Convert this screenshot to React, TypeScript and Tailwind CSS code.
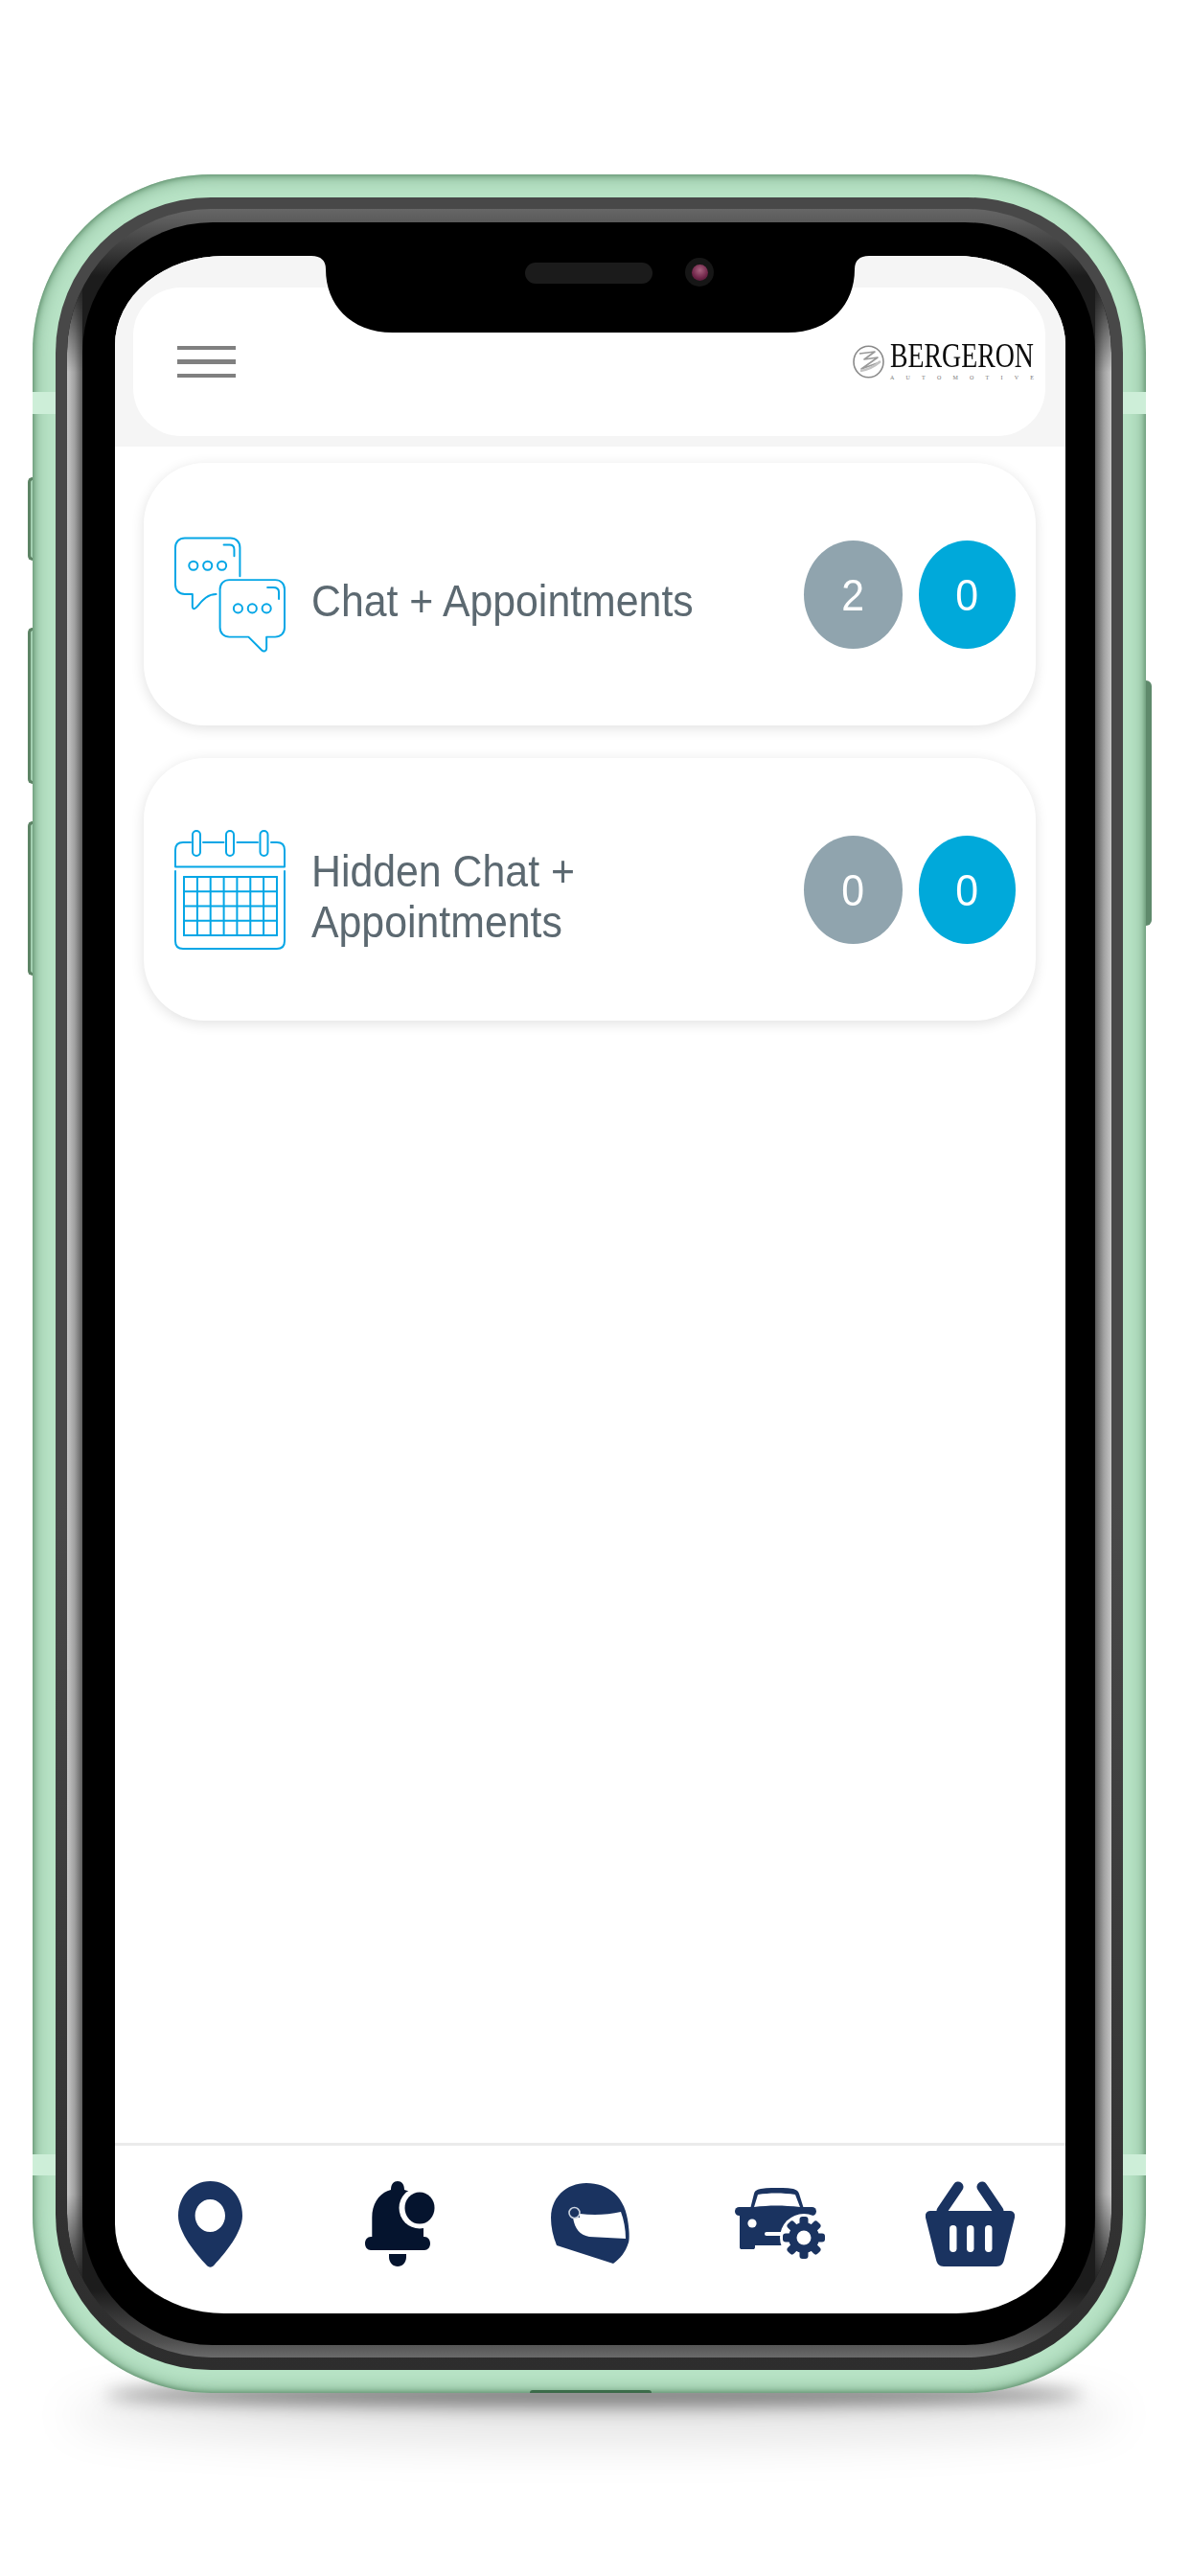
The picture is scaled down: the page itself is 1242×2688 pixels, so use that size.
import React from 'react';

const NAVY = '#1a3360';
const SKY = '#04a6e6';

function ChatIcon() {
  return (
    <svg width="117" height="121" viewBox="0 0 117 121" fill="none" stroke={SKY} strokeWidth="2" strokeLinecap="round" strokeLinejoin="round">
      <path d="M69 41V11C69 5 65 1 59 1H11C5 1 1 5 1 11V50C1 56 5 60 11 60H19V73C19 76 21 76 23 74C28 69 33 60 44 60" />
      <path d="M52 8H58C61 8 63 10 63 13V20" />
      <circle cx="20" cy="30" r="4.6" />
      <circle cx="35" cy="30" r="4.6" />
      <circle cx="50" cy="30" r="4.6" />
      <path d="M58 45H106C112 45 116 49 116 55V95C116 101 112 105 106 105H97V117C97 120 94 121 92 119L78 105H58C52 105 48 101 48 95V55C48 49 52 45 58 45Z" />
      <path d="M98 53H104C108 53 110 55 110 58V65" />
      <circle cx="67" cy="75" r="4.6" />
      <circle cx="82" cy="75" r="4.6" />
      <circle cx="97" cy="75" r="4.6" />
    </svg>
  );
}

function CalendarIcon() {
  const cols = [10, 23.9, 37.7, 51.6, 65.4, 79.3, 93.1, 107];
  const rows = [49, 64.25, 79.5, 94.75, 110];
  return (
    <svg width="116" height="125" viewBox="0 0 116 125" fill="none" stroke={SKY} strokeWidth="2" strokeLinecap="round" strokeLinejoin="round">
      <path d="M1 38.5V21C1 16 4 13 9 13H17M30 13H51.5M65.5 13H87M101 13H107C112 13 115 16 115 21V38.5H1" />
      <rect x="19" y="1" width="8" height="26" rx="4" />
      <rect x="54" y="1" width="8" height="26" rx="4" />
      <rect x="89.5" y="1" width="8" height="26" rx="4" />
      <path d="M1 43V116C1 121 4 124 9 124H107C112 124 115 121 115 116V43" />
      {cols.map((x) => (
        <path key={x} d={`M${x} 49V110`} />
      ))}
      {rows.map((y) => (
        <path key={y} d={`M10 ${y}H107`} />
      ))}
    </svg>
  );
}

function PinIcon() {
  return (
    <svg width="67" height="90" viewBox="0 0 67 90">
      <path
        fill={NAVY}
        fillRule="evenodd"
        d="M33.5 0C52 0 67 15 67 36C67 54 48 76 38 87C35 90.5 32 90.5 29 87C19 76 0 54 0 36C0 15 15 0 33.5 0ZM33.3 19C24.6 19 17.6 26.6 17.6 36C17.6 45.4 24.6 53 33.3 53C42 53 49 45.4 49 36C49 26.6 42 19 33.3 19Z"
      />
    </svg>
  );
}

function BellIcon() {
  return (
    <svg width="74" height="90" viewBox="0 0 74 90">
      <path
        fill="#05142e"
        d="M27 9C27 3 30 0 34 0C38 0 41 3 41 9C52 12 61 20 61 34V58H62C65.5 58 68 61 68 65C68 69 65.5 72 62 72H6C2.5 72 0 69 0 65C0 61 2.5 58 6 58H7.3V38C7.3 23 15 12 27 9Z"
      />
      <path fill="#05142e" d="M25 76H43V79C43 85 39 89 34 89C29 89 25 85 25 79Z" />
      <circle cx="57" cy="28" r="21.5" fill="#fff" />
      <ellipse cx="57" cy="28" rx="15.5" ry="16.5" fill="#05142e" />
    </svg>
  );
}

function HelmetIcon() {
  return (
    <svg width="82" height="85" viewBox="0 0 82 85">
      <path fill={NAVY} d="M37 0C60 0 76 14 80 38C82 50 82 58 81 62C78 72 72 79 65 84L6 65C2 55 0 46 0 36C0 15 16 0 37 0Z" />
      <path fill="#fff" d="M30 32C45 34 60 33 73 30C76 38 78 48 78 58L40 56C30 54 25 48 23 36L30 36Z" />
      <circle cx="24.5" cy="31" r="5.5" fill={NAVY} stroke="#c9d2df" strokeWidth="1.6" />
    </svg>
  );
}

function CarGearIcon() {
  const teeth = [0, 45, 90, 135, 180, 225, 270, 315];
  return (
    <svg width="94" height="76" viewBox="0 0 94 76">
      <path fill={NAVY} d="M16 22L20 6C21 2 24 2 27 1C38 -0.5 50 -0.5 61 1C64 2 66 3 67 6L72 22Z" />
      <path fill="#fff" d="M20 20L24 7C36 5 50 5 63 7L68 20C50 18 36 18 20 20Z" />
      <rect x="0" y="20" width="85" height="9" rx="4.5" fill={NAVY} />
      <path fill={NAVY} d="M5 25H80V50H60V60H21V62C21 63.5 20 64 19 64H7C6 64 5 63.5 5 62Z" />
      <circle cx="18" cy="37" r="4.6" fill="#fff" />
      <rect x="31" y="46" width="22" height="4" rx="2" fill="#fff" />
      <circle cx="72" cy="52" r="25" fill="#fff" />
      {teeth.map((a) => (
        <rect key={a} x="67.5" y="30" width="9" height="12" rx="3" fill={NAVY} transform={`rotate(${a} 72 52)`} />
      ))}
      <circle cx="72" cy="52" r="16" fill={NAVY} />
      <circle cx="72" cy="52" r="7.5" fill="#fff" />
    </svg>
  );
}

function BasketIcon() {
  return (
    <svg width="93" height="89" viewBox="0 0 93 89">
      <path stroke={NAVY} strokeWidth="11" strokeLinecap="round" d="M34 6L17 31M59 6L76 31" fill="none" />
      <path fill={NAVY} d="M5 31H88C92 31 94 35 93 38L82 82C81 86 79 89 74 89H19C14 89 12 86 11 82L0 38C-1 35 1 31 5 31Z" />
      <rect x="25" y="46" width="7.5" height="28" rx="3.7" fill="#fff" />
      <rect x="43" y="46" width="7.5" height="28" rx="3.7" fill="#fff" />
      <rect x="62" y="46" width="7.5" height="28" rx="3.7" fill="#fff" />
    </svg>
  );
}

function LogoMark() {
  return (
    <svg width="33" height="35" viewBox="0 0 33 35" fill="none">
      <ellipse cx="16.5" cy="17.5" rx="15.5" ry="16.2" stroke="#8a8a8a" strokeWidth="1.6" />
      <path d="M7 9L23 7L12 15L26 13L9 25L28 18" stroke="#9a9a9a" strokeWidth="1.6" strokeLinejoin="round" />
      <path d="M8 27C15 26 22 23 29 17" stroke="#c4c4c4" strokeWidth="2.4" />
    </svg>
  );
}

function CountRow({ icon, label, first, second }: { icon: React.ReactNode; label: string; first: number; second: number }) {
  return (
    <div className="flex h-[274px] items-center rounded-[64px] bg-white pl-[32px] pr-[21px] shadow-[0_3px_14px_rgba(0,0,0,0.12)]">
      <div className="flex w-[116px] shrink-0 justify-center">{icon}</div>
      <div className="ml-[27px] min-w-0 flex-1 origin-left scale-x-[.911] pt-[15px] text-[47px] leading-[52.6px] text-[#5c6971]">{label}</div>
      <div className="flex h-[113px] w-[103px] shrink-0 items-center justify-center rounded-[50%] bg-[#90a4ae] pt-[3px] text-[47px] text-white">
        <span className="scale-x-[.911]">{first}</span>
      </div>
      <div className="ml-[17px] flex h-[113px] w-[101px] shrink-0 items-center justify-center rounded-[50%] bg-[#00a9da] pt-[3px] text-[47px] text-white">
        <span className="scale-x-[.911]">{second}</span>
      </div>
    </div>
  );
}

export default function App() {
  return (
    <div className="relative h-[2688px] w-[1242px] overflow-hidden bg-white pl-[34px] pt-[182px] font-['Liberation_Sans',Arial,sans-serif]">
      {/* shadow under the phone */}
      <div className="absolute left-[70px] top-[2490px] h-[60px] w-[1100px] rounded-[50%] bg-[#000]/10 blur-[22px]" />
      <div className="absolute left-[110px] top-[2486px] h-[26px] w-[1020px] rounded-[50%] bg-[#000]/45 blur-[9px]" />

      {/* side buttons */}
      <div className="absolute left-[29px] top-[498px] h-[87px] w-[10px] rounded-l-[5px] border-y-[3px] border-l-[3px] border-[#5d8465] bg-[#a3cfb1]" />
      <div className="absolute left-[29px] top-[655px] h-[163px] w-[10px] rounded-l-[5px] border-y-[3px] border-l-[3px] border-[#5d8465] bg-[#a3cfb1]" />
      <div className="absolute left-[29px] top-[857px] h-[161px] w-[10px] rounded-l-[5px] border-y-[3px] border-l-[3px] border-[#5d8465] bg-[#a3cfb1]" />
      <div className="absolute left-[1192px] top-[710px] h-[256px] w-[10px] rounded-r-[6px] bg-[#5f8a6c]" />

      {/* phone body */}
      <div className="relative h-[2315px] w-[1162px] rounded-[186px] bg-[#b8e3c6] p-[24px] shadow-[inset_0_0_6px_#4d7d5a,inset_0_0_20px_#6f9f7d]">
        {/* antenna bands */}
        <div className="absolute left-0 top-[227px] h-[23px] w-[24px] bg-[#cdeed8]" />
        <div className="absolute right-0 top-[227px] h-[23px] w-[24px] bg-[#cdeed8]" />
        <div className="absolute left-0 top-[2066px] h-[22px] w-[24px] bg-[#cdeed8]" />
        <div className="absolute right-0 top-[2066px] h-[22px] w-[24px] bg-[#cdeed8]" />
        <div className="absolute bottom-0 left-[519px] h-[3px] w-[127px] rounded-t-full bg-[#3c6b4a]" />

        <div className="relative h-full rounded-[162px] bg-[linear-gradient(180deg,#484848_0%,#484848_60%,#2d2d2d_100%)] pb-[13px] pl-[12px] pr-[12px] pt-[12px]">
          <div className="relative h-full rounded-[150px] bg-[linear-gradient(180deg,#666_0,#5a5a5a_14px,#1c1c1c_70px,#1c1c1c_calc(100%-70px),#505050_calc(100%-16px),#6a6a6a_100%)] pb-[13px] pl-[16px] pr-[17px] pt-[14px]">
            <div className="absolute inset-0 rounded-[150px] bg-[linear-gradient(90deg,#c6c6c6_0,#a0a0a0_8px,#5c5c5c_16px,transparent_16px,transparent_calc(100%-17px),#5c5c5c_calc(100%-17px),#a0a0a0_calc(100%-8px),#c6c6c6_100%)] [mask-image:linear-gradient(180deg,transparent_70px,#000_170px,#000_calc(100%-170px),transparent_calc(100%-70px))]" />
            <div className="relative flex h-full flex-col rounded-[136px] bg-black pb-[33px] pl-[34px] pr-[31px] pt-[35px]">
              {/* screen */}
              <div className="relative flex h-full flex-col overflow-hidden rounded-[114px/93px] bg-white">
                <div className="h-[199px] shrink-0 bg-[#f5f5f5] pb-[11px] pl-[19px] pr-[21px] pt-[33px]">
                  <div className="flex h-full items-center justify-between rounded-[50px] bg-white pl-[46px] pr-[12px]">
                    <div className="flex w-[61px] flex-col gap-[10px]">
                      <div className="h-[4.5px] bg-[#808080]" />
                      <div className="h-[4.5px] bg-[#808080]" />
                      <div className="h-[4.5px] bg-[#808080]" />
                    </div>
                    <div className="flex items-center gap-[6px]">
                      <LogoMark />
                      <div className="mb-[7px] w-[150px] font-['Liberation_Serif',serif]">
                        <div className="origin-left scale-x-[.773] whitespace-nowrap text-[36px] leading-[40px] text-[#0c0c0c]">BERGERON</div>
                        <div className="flex justify-between text-[6px] leading-[7px] text-[#777]">
                          {'AUTOMOTIVE'.split('').map((c, i) => (
                            <span key={i}>{c}</span>
                          ))}
                        </div>
                      </div>
                    </div>
                  </div>
                </div>

                <div className="flex flex-1 flex-col gap-[34px] pl-[30px] pr-[31px] pt-[17px]">
                  <CountRow icon={<ChatIcon />} label="Chat + Appointments" first={2} second={0} />
                  <CountRow icon={<CalendarIcon />} label="Hidden Chat + Appointments" first={0} second={0} />
                </div>

                <div className="grid h-[178px] shrink-0 grid-cols-5 items-center border-t-[3px] border-[#ebebeb] pb-[12px]">
                  <div className="flex justify-center"><PinIcon /></div>
                  <div className="flex justify-center"><BellIcon /></div>
                  <div className="flex justify-center"><HelmetIcon /></div>
                  <div className="flex justify-center"><CarGearIcon /></div>
                  <div className="flex justify-center"><BasketIcon /></div>
                </div>

                {/* notch */}
                <div className="absolute left-[205px] top-0 h-[80px] w-[582px]">
                  <svg width="582" height="80" viewBox="0 0 582 80" className="absolute inset-0">
                    <path fill="#000" d="M0 0C10 0 15 5 15 14C15 50 40 80 85 80H497C542 80 567 50 567 14C567 5 572 0 582 0Z" />
                  </svg>
                  <div className="absolute left-[223px] top-[7px] h-[22px] w-[133px] rounded-full bg-[#1b1b1b]" />
                  <div className="absolute left-[390px] top-[2px] flex h-[30px] w-[30px] items-center justify-center rounded-full bg-[#161616]">
                    <div className="h-[17px] w-[17px] rounded-full bg-[radial-gradient(circle_at_50%_35%,#a8627f,#6e2448_60%,#3a1226)]" />
                  </div>
                </div>
              </div>
            </div>
          </div>
        </div>
      </div>
    </div>
  );
}
